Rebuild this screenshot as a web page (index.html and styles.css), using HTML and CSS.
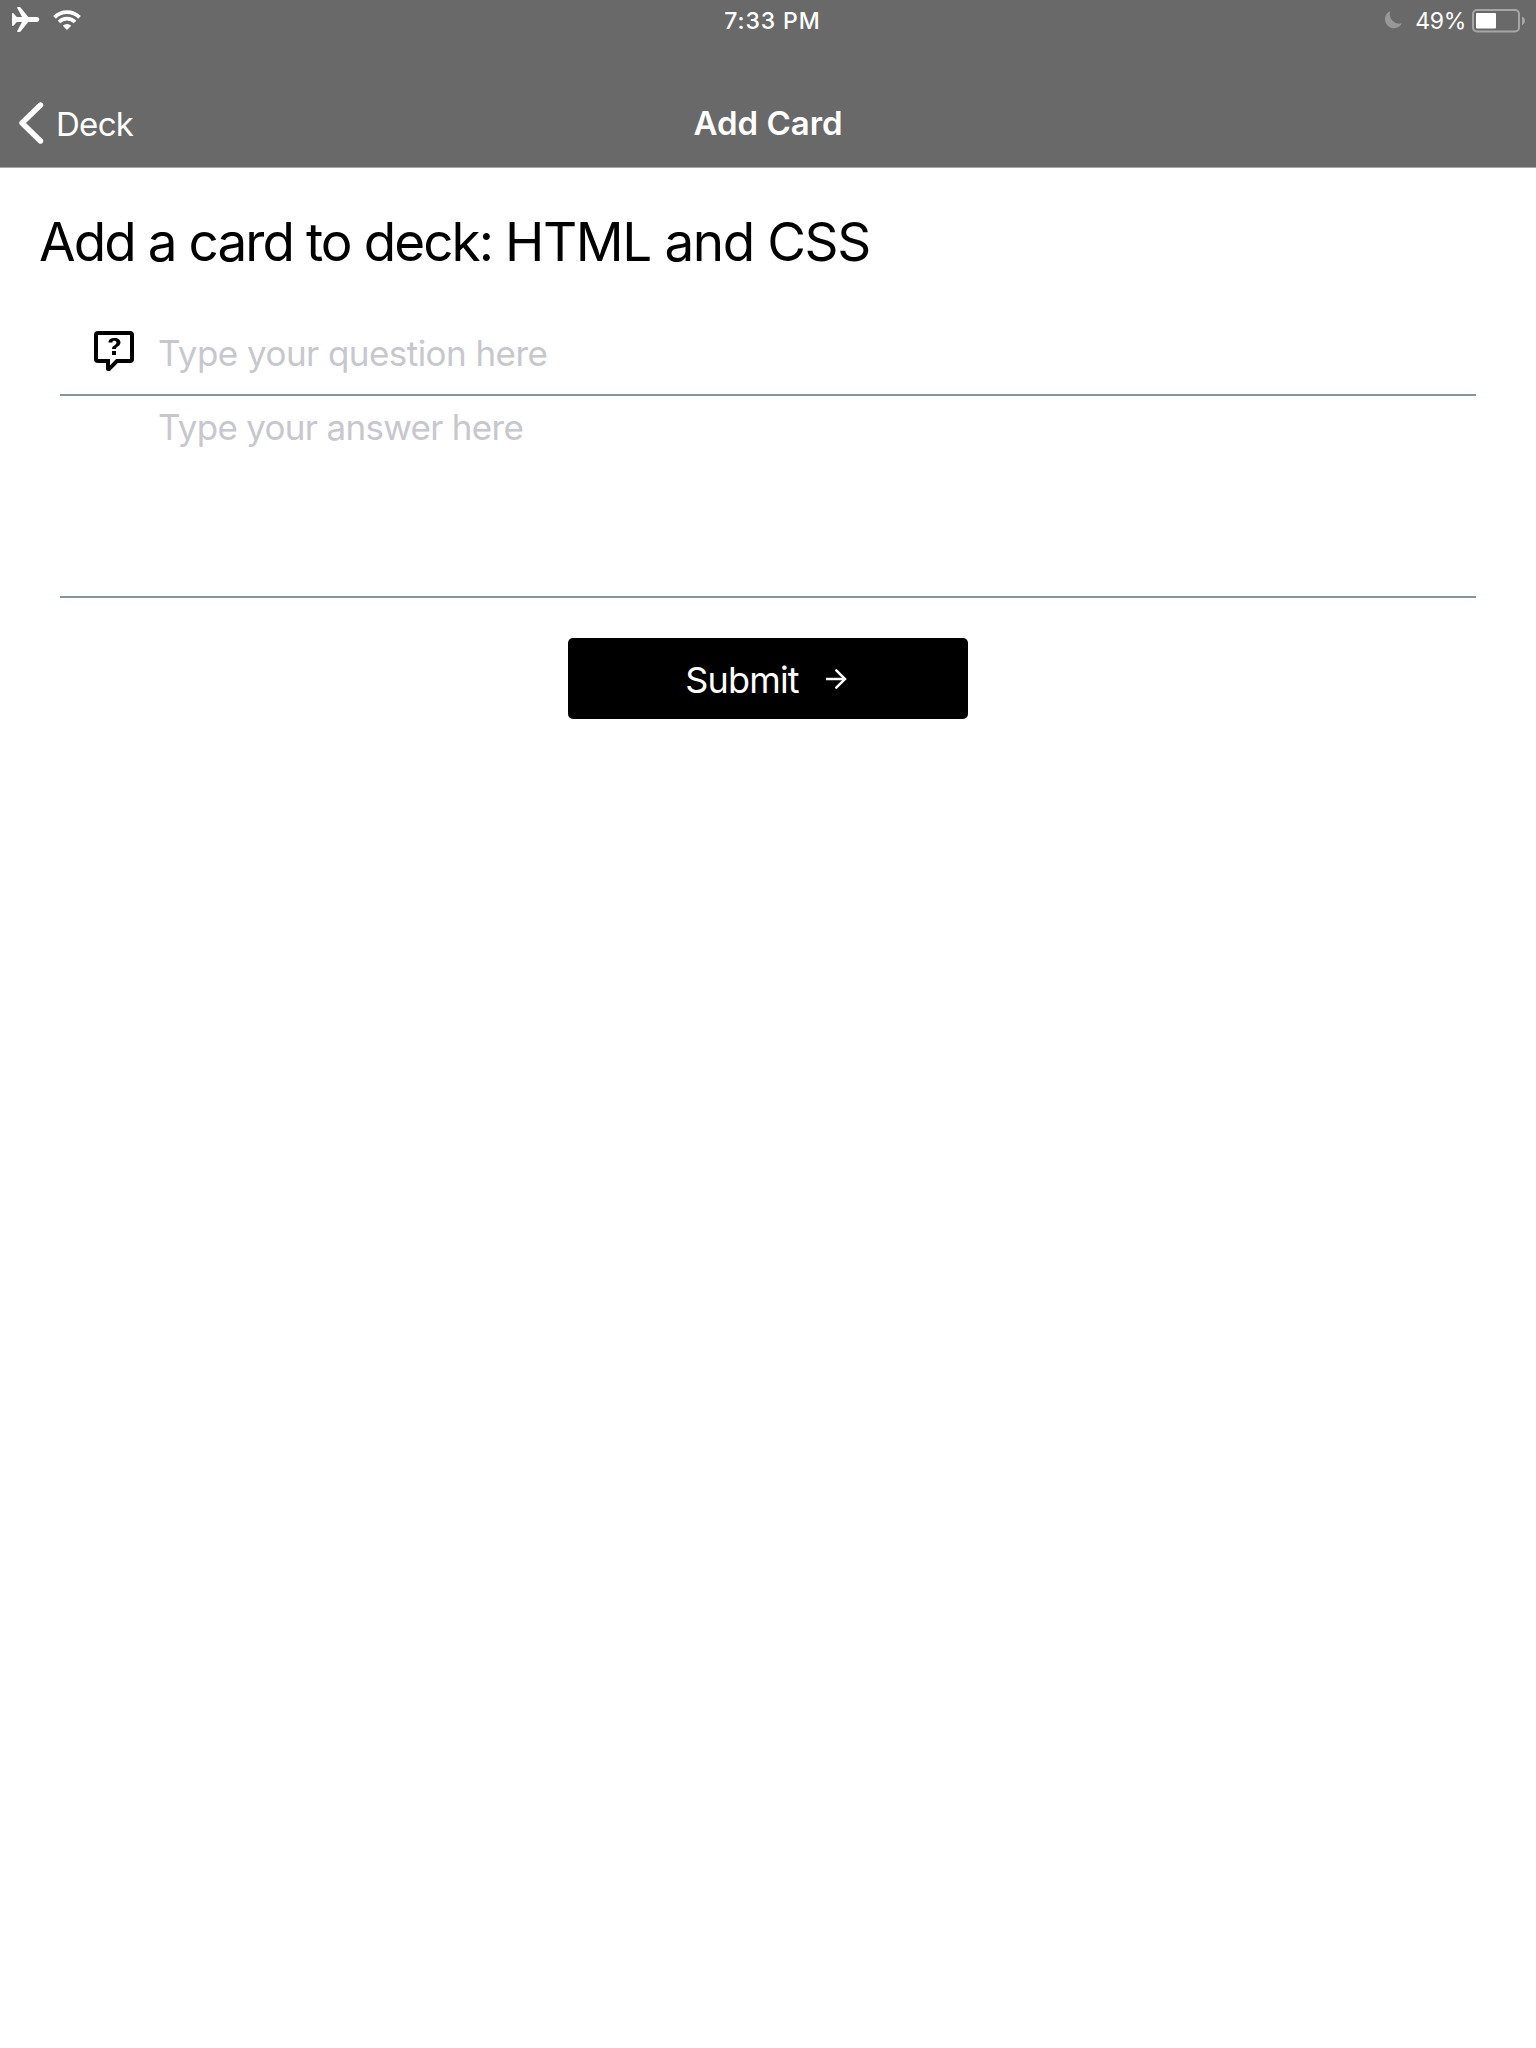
FILE: index.html
```html
<!DOCTYPE html>
<html lang="en">
<head>
<meta charset="utf-8">
<title>Add Card</title>
<link rel="stylesheet" href="styles.css">
</head>
<body>
<header class="header">
  <div class="status">
    <div class="status-left">
      <svg class="plane" width="28" height="26" viewBox="0 0 28 26"><path d="M0 6.300H1.500L4.800 10H10L5.200 1Q5 0 5.800 0H7.500Q8.300 0 8.800.7L16.300 10H25Q27.300 10.300 27.300 12.500T25 15H16.300L8.800 24.300Q8.300 25 7.500 25H5.800Q5 25 5.200 24L10 15H4.800L1.500 18.700H0Z" fill="#fff"/></svg>
      <svg class="wifi" width="28" height="20" viewBox="0 0 28 20" fill="none" stroke="#fff" stroke-width="3.800"><path d="M1.500 7.300a17.600 17.600 0 0 1 25 0M6 12a11.200 11.200 0 0 1 16 0"/><path d="M14 20l-4.200-4.200a6 6 0 0 1 8.400 0z" fill="#fff" stroke="none"/></svg>
    </div>
    <div class="time">7:33 PM</div>
    <div class="status-right">
      <svg class="moon" width="18" height="18" viewBox="0 0 18 18"><path d="M6.300 0A9 9 0 1 0 18 12.300 9.600 9.600 0 0 1 6.300 0z" fill="#989898"/></svg>
      <span class="percent">49%</span>
      <svg class="battery" width="53" height="24" viewBox="0 0 53 24"><rect x="1" y="1" width="46" height="21.500" rx="4" fill="none" stroke="#a6a6a6" stroke-width="2"/><rect x="4" y="4" width="20" height="15.500" rx="1" fill="#fff"/><path d="M50 7.500c4 1.500 4 7 0 8.500z" fill="#a6a6a6"/></svg>
    </div>
  </div>
  <nav class="nav">
    <a class="back"><svg class="chevron" width="26" height="42" viewBox="0 0 26 42"><path d="M22.500 3L4 21L22.500 39" fill="none" stroke="#fff" stroke-width="5.400" stroke-linecap="round" stroke-linejoin="round"/></svg><span class="back-label">Deck</span></a>
    <h1 class="nav-title">Add Card</h1>
    <div></div>
  </nav>
</header>
<main class="content">
  <h2 class="title">Add a card to deck: <span class="deck-name">HTML and CSS</span></h2>
  <div class="field question">
    <svg class="question-icon" width="48" height="48" viewBox="0 0 24 24"><path d="M4 2A2 2 0 0 0 2 4V16A2 2 0 0 0 4 18H8V21A1 1 0 0 0 9 22H9.500C9.750 22 10 21.900 10.200 21.710L13.900 18H20A2 2 0 0 0 22 16V4A2 2 0 0 0 20 2H4M4 4H20V16H13.080L10 19.080V16H4V4M12.190 5.500C11.300 5.500 10.590 5.680 10.050 6.040C9.500 6.400 9.220 7 9.270 7.690H11.240C11.240 7.390 11.340 7.200 11.500 7.060C11.690 6.920 11.920 6.850 12.190 6.850C12.500 6.850 12.770 6.930 12.950 7.110C13.130 7.280 13.220 7.500 13.220 7.800C13.220 8.080 13.140 8.330 13 8.540C12.830 8.760 12.620 8.940 12.360 9.080C11.840 9.400 11.500 9.680 11.290 9.920C11.100 10.160 11 10.500 11 11H13C13 10.720 13.050 10.500 13.140 10.320C13.230 10.150 13.400 10 13.660 9.850C14.120 9.640 14.500 9.360 14.790 9C15.080 8.630 15.230 8.240 15.230 7.800C15.230 7.100 14.960 6.540 14.420 6.120C13.880 5.710 13.130 5.500 12.190 5.500M11 12V14H13V12H11Z" fill-rule="evenodd"/></svg>
    <span class="placeholder">Type your question here</span>
  </div>
  <div class="field answer"><span class="placeholder">Type your answer here</span></div>
  <button class="submit"><span class="submit-label">Submit</span><svg class="arrow" width="30" height="30" viewBox="0 0 30 30" fill="none" stroke="#fff" stroke-width="2.500"><path d="M5 15H23"/><path d="M15.300 6.300L24 15L15.300 23.700" stroke-linecap="round"/></svg></button>
</main>
</body>
</html>
```
FILE: styles.css
```css
* { box-sizing: border-box; }
body { margin: 0; background: #fff; color: #000; font-family: Inter, "Liberation Sans", sans-serif; }
svg { display: block; flex: none; }
h1, h2 { margin: 0; font-weight: 400; }
span { white-space: nowrap; }
.header { height: 168px; background: #696969; border-bottom: 1px solid #a7a7a7; color: #fff; }
.status { height: 41px; display: grid; grid-template-columns: 1fr auto 1fr; padding: 0 11px 0 12px; }
.status-left { display: flex; align-items: flex-start; gap: 13px; padding-top: 7px; }
.wifi { margin-top: 3px; }
.time { font-size: 23px; line-height: 42px; font-weight: 500; letter-spacing: 0.9px; padding-left: 8px; }
.status-right { display: flex; justify-content: flex-end; }
.moon { margin: 11px 13px 0 0; }
.percent { font-size: 23px; line-height: 42px; margin-right: 6px; letter-spacing: -0.3px; }
.battery { margin-top: 9px; }
.nav { height: 126px; display: grid; grid-template-columns: 1fr auto 1fr; padding: 41px 18px 0; }
.back { display: flex; height: 84px; }
.chevron { margin-top: 20px; }
.back-label { font-size: 33px; line-height: 84px; margin-left: 12px; letter-spacing: -0.7px; }
.nav-title { font-size: 33px; line-height: 82px; font-weight: 600; }
.content { padding: 40px 60px 0; display: flex; flex-direction: column; }
.title { font-size: 53px; line-height: 68px; margin-left: -21px; letter-spacing: -1.92px; }
.deck-name { letter-spacing: -1.4px; }
.field { border-bottom: 2px solid #8592a0; display: flex; }
.question { height: 84px; margin-top: 36px; padding: 15px 0 0 30px; }
.question .placeholder { margin-left: 20px; padding-top: 1px; letter-spacing: -0.55px; }
.answer { height: 202px; padding: 6px 0 0 98px; }
.placeholder { color: #c7c7cd; font-size: 35px; line-height: 50px; letter-spacing: -0.7px; }
.submit { width: 400px; height: 81px; margin: 40px auto 0; border: 0; border-radius: 5px; background: #000; color: #fff; font-family: inherit; display: flex; justify-content: center; align-items: center; padding: 0; }
.submit-label { font-size: 36px; line-height: 78px; padding-top: 3px; margin-right: 22px; letter-spacing: -0.8px; }
```
